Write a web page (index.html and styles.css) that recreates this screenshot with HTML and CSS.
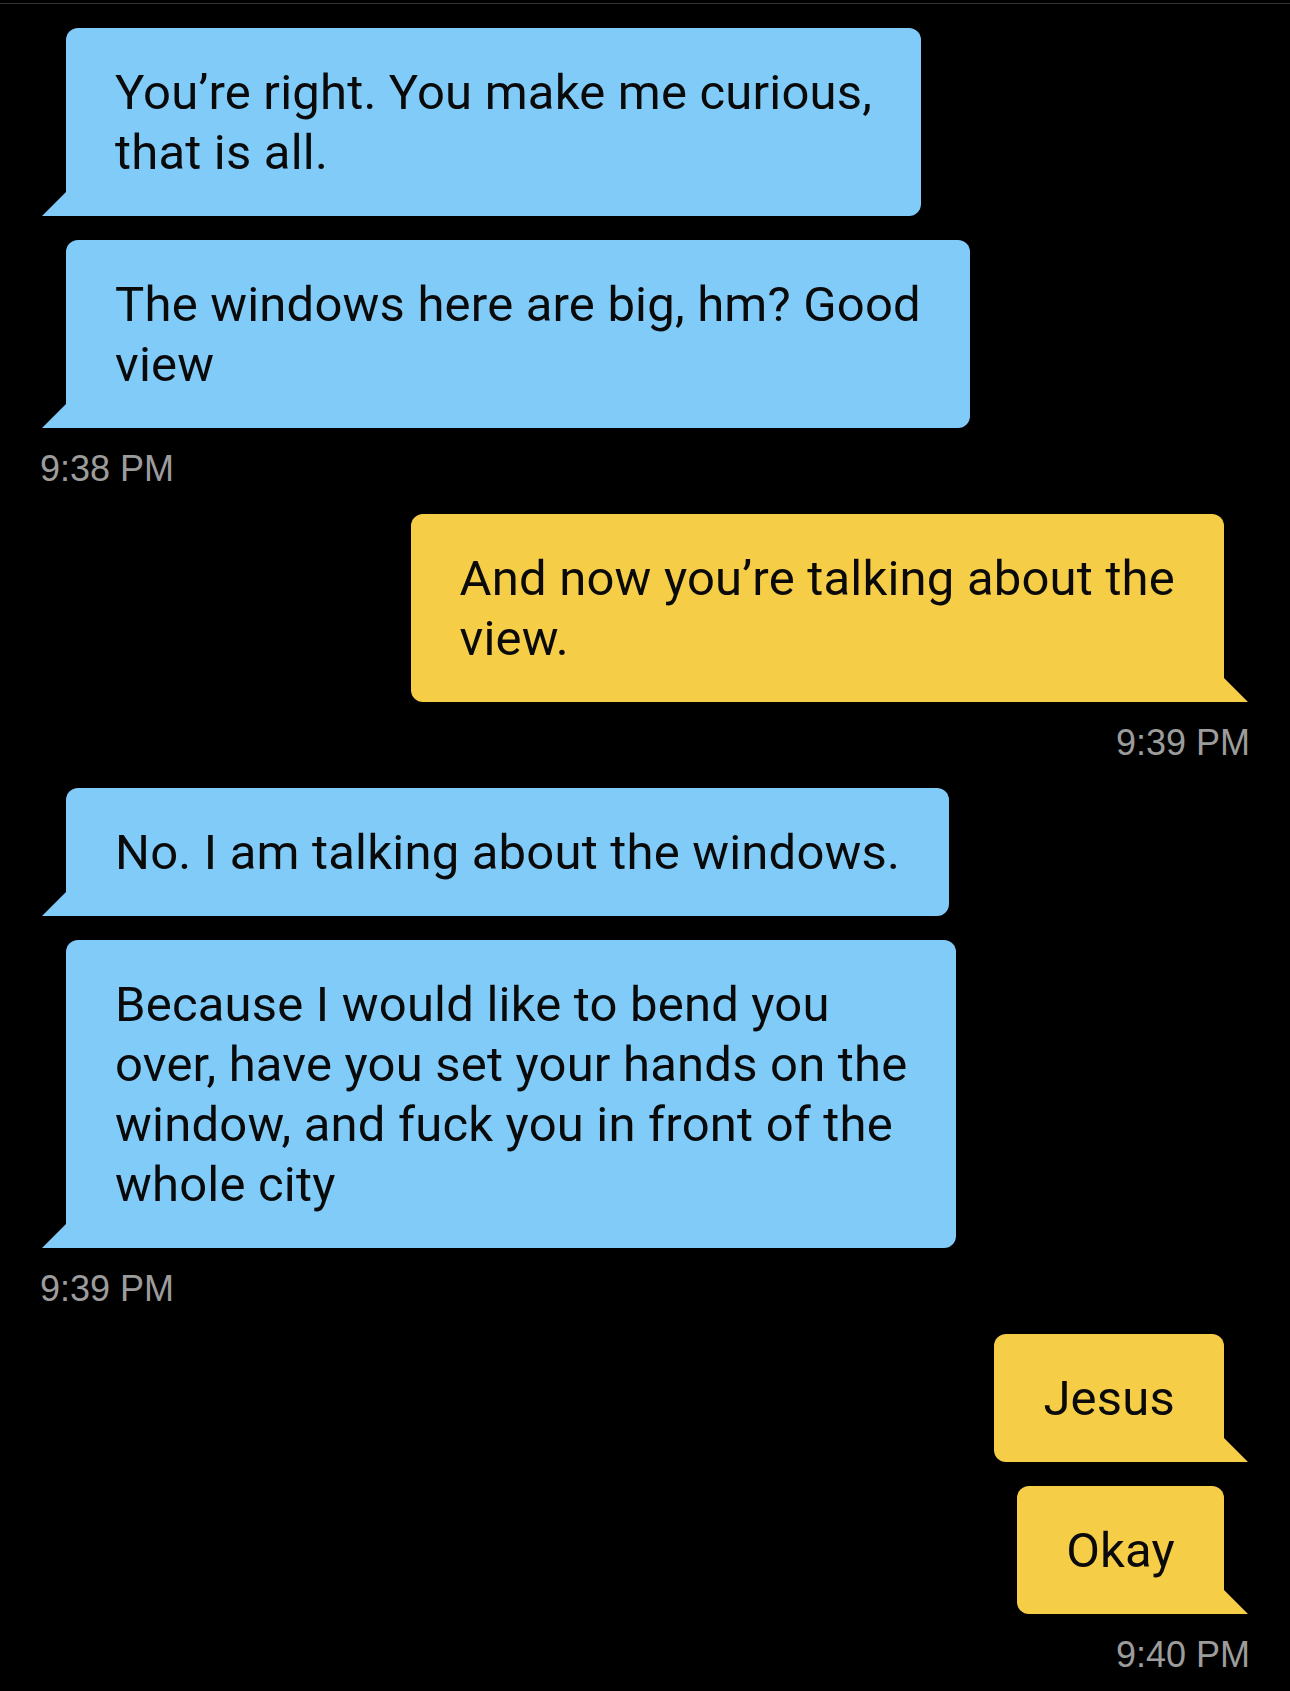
FILE: index.html
```html
<!DOCTYPE html>
<html lang="en">
<head>
    <meta charset="UTF-8">
    <meta name="viewport" content="width=device-width, initial-scale=1.0">
    <title>Chat</title>
    <link rel="stylesheet" href="styles.css">
</head>
<body>

<div class="chat">
    <div class="group in">
        <p class="bubble">You’re right. You make me curious,<br>that is all.</p>
        <p class="bubble">The windows here are big, hm? Good<br>view</p>
        <span class="time">9:38 PM</span>
    </div>

    <div class="group out">
        <p class="bubble">And now you’re talking about the<br>view.</p>
        <span class="time">9:39 PM</span>
    </div>

    <div class="group in">
        <p class="bubble">No. I am talking about the windows.</p>
        <p class="bubble">Because I would like to bend you<br>over, have you set your hands on the<br>window, and fuck you in front of the<br>whole city</p>
        <span class="time">9:39 PM</span>
    </div>

    <div class="group out">
        <p class="bubble">Jesus</p>
        <p class="bubble">Okay</p>
        <span class="time">9:40 PM</span>
    </div>
</div>

</body>
</html>
```

FILE: styles.css
```css
html {
    background-color: #000;
}
body {
    margin: 0;
    padding-top: 3px;
    background-color: #000;
    font-family: Roboto, "Liberation Sans", sans-serif;
}
.chat {
    border-top: 1px solid #333;
    padding: 24px 40px 20px;
}
.group {
    display: flex;
    flex-direction: column;
    align-items: flex-start;
}
.group.out {
    align-items: flex-end;
}
.group + .group {
    margin-top: 24px;
}
.bubble {
    position: relative;
    margin: 0 26px;
    padding: 35px 49px 33px;
    font-size: 49px;
    line-height: 60px;
    letter-spacing: 0.2px;
    color: #0a0a0a;
    white-space: nowrap;
    background-color: #80cbf8;
    border-radius: 12px 12px 12px 0;
}
.bubble + .bubble {
    margin-top: 24px;
}
/* speech tail */
.bubble::after {
    content: '';
    position: absolute;
    bottom: 0;
    left: -24px;
    width: 24px;
    height: 24px;
    background-color: inherit;
    clip-path: polygon(100% 0, 100% 100%, 0 100%);
}
.out .bubble {
    background-color: #f6cd47;
    border-radius: 12px 12px 0 12px;
}
.out .bubble::after {
    left: auto;
    right: -24px;
    clip-path: polygon(0 0, 100% 100%, 0 100%);
}
.time {
    margin-top: 20px;
    font-family: "Liberation Sans", Arial, sans-serif;
    font-size: 36px;
    line-height: 42px;
    color: #9c9c9c;
}
```
